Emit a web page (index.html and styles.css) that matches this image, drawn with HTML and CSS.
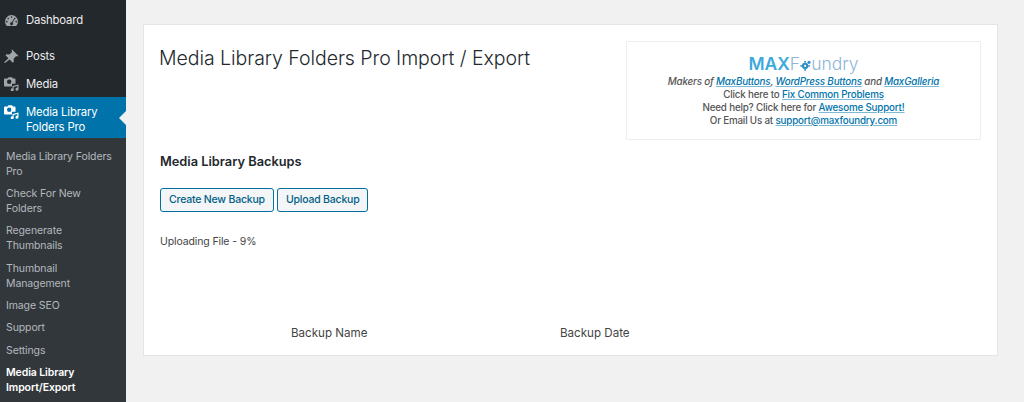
FILE: index.html
```html
<!DOCTYPE html>
<html lang="en">
<head>
<meta charset="utf-8">
<title>Media Library Folders Pro Import / Export</title>
<link rel="stylesheet" href="styles.css">
</head>
<body>
<div class="app">
  <nav class="side">
    <a class="item first"><svg class="ico gauge" viewBox="2 3 16 13.600"><path fill="currentColor" fill-rule="evenodd" d="M10 3a8 8 0 0 0-8 8c0 2.200.9 4.200 2.300 5.600h11.400A8 8 0 0 0 18 11a8 8 0 0 0-8-8zM10 4.600a1 1 0 1 1 0 2 1 1 0 0 1 0-2zM6 6.300a1 1 0 1 1 0 2 1 1 0 0 1 0-2zm8 0a1 1 0 1 1 0 2 1 1 0 0 1 0-2zM4.200 10.200a1 1 0 1 1 0 2 1 1 0 0 1 0-2zm11.600 0a1 1 0 1 1 0 2 1 1 0 0 1 0-2zM13 7.500l.9.5-2.500 4.600a1.800 1.800 0 1 1-1-.5z"/></svg><span>Dashboard</span></a>
    <a class="item gap"><svg class="ico" viewBox="1.500 1.500 17 16"><path fill="currentColor" d="M10.400 1.800l7.600 7.600-1.500.6-1.100-.4-3 3 .3 3.300-1.200 1.200-3.700-3.700-5.300 4-.9-.9 4.900-4.400-3.400-3.400 1.200-1.200 3.300.3 3-3-.4-1.200z"/></svg><span>Posts</span></a>
    <a class="item media"><svg class="ico" viewBox="0 0 15 14"><path fill="currentColor" fill-rule="evenodd" d="M1 1.500h2.500l1-1.200H8l1 1.200h1.500a1 1 0 0 1 1 1v4.300H8v2.700H1a1 1 0 0 1-1-1V2.500a1 1 0 0 1 1-1zm4.200 1a2.200 2.200 0 1 0 0 4.400 2.200 2.200 0 0 0 0-4.400zM8.500 9l6-1.600v4.800a1.500 1.500 0 1 1-1.200-1.400V9l-3.600 1v2.800a1.500 1.500 0 1 1-1.200-1.400z"/></svg><span>Media</span></a>
    <a class="item active"><svg class="ico" viewBox="0 0 15 14"><path fill="currentColor" fill-rule="evenodd" d="M1 1.500h2.500l1-1.200H8l1 1.200h1.500a1 1 0 0 1 1 1v4.300H8v2.700H1a1 1 0 0 1-1-1V2.500a1 1 0 0 1 1-1zm4.200 1a2.200 2.200 0 1 0 0 4.400 2.200 2.200 0 0 0 0-4.400zM8.500 9l6-1.600v4.800a1.500 1.500 0 1 1-1.200-1.400V9l-3.600 1v2.800a1.500 1.500 0 1 1-1.200-1.400z"/></svg><span>Media Library Folders Pro</span></a>
    <ul class="sub">
      <li>Media Library Folders Pro</li>
      <li>Check For New Folders</li>
      <li>Regenerate Thumbnails</li>
      <li>Thumbnail Management</li>
      <li>Image SEO</li>
      <li>Support</li>
      <li>Settings</li>
      <li class="current">Media Library Import/Export</li>
    </ul>
  </nav>
  <main class="main">
    <section class="card">
      <div class="top">
        <h1>Media Library Folders Pro Import / Export</h1>
        <aside class="promo">
          <div class="logo"><b>MAX</b>F<svg class="gear" viewBox="0 0 14 14"><circle cx="6.500" cy="7.500" r="4" fill="#2f8fc4"/><circle cx="6.500" cy="7.500" r="1.300" fill="#fff"/><circle cx="11.500" cy="3" r="2" fill="#2f8fc4"/><circle cx="6.500" cy="2.200" r="1.200" fill="#2f8fc4"/><circle cx="1.500" cy="7.500" r="1.200" fill="#2f8fc4"/><circle cx="6.500" cy="12.800" r="1.200" fill="#2f8fc4"/><circle cx="11.500" cy="7.500" r="1.200" fill="#2f8fc4"/></svg>undry</div>
          <p><i>Makers of <a>MaxButtons</a>, <a>WordPress Buttons</a> and <a>MaxGalleria</a></i></p>
          <p>Click here to <a>Fix Common Problems</a></p>
          <p>Need help? Click here for <a>Awesome Support!</a></p>
          <p>Or Email Us at <a>support@maxfoundry.com</a></p>
        </aside>
      </div>
      <h2>Media Library Backups</h2>
      <div class="buttons">
        <button class="btn">Create New Backup</button>
        <button class="btn">Upload Backup</button>
      </div>
      <p class="status">Uploading File - 9%</p>
      <div class="thead"><span>Backup Name</span><span>Backup Date</span></div>
    </section>
  </main>
</div>
</body>
</html>
```
FILE: styles.css
```css
* { box-sizing: border-box; }
html, body { margin: 0; height: 100%; overflow: hidden; }
body { background: #f1f1f1; font-family: Inter, "Liberation Sans", sans-serif; font-size: 11px; color: #444; }
.app { display: flex; height: 402px; }
.side { width: 126px; flex: none; display: flex; flex-direction: column; background: #23282d; color: #eee; font-size: 11.300px; letter-spacing: -0.150px; line-height: 15px; padding-top: 5px; overflow: hidden; }
.item { display: flex; align-items: flex-start; padding: 8px 6px 0 4px; height: 29px; flex: none; }
.first { height: 31px; }
.gap { margin-top: 5px; height: 28px; }
.media { height: 28px; }
.ico { width: 15px; height: 14px; flex: none; margin-right: 7px; color: #a0a5aa; }
.gauge { width: 13px; height: 11px; margin: 2px 8px 0 1px; }
.active { background: #0073aa; color: #fff; position: relative; padding-top: 8px; height: 41px; }
.active .ico { color: #fff; }
.active::after { content: ""; position: absolute; right: 0; top: 14px; border: 7px solid transparent; border-left: 0; border-right-color: #f1f1f1; }
.sub { list-style: none; margin: 0; padding: 10.500px 12px 0 6px; flex: 1; background: #32373c; color: #b4b9be; font-size: 10.500px; letter-spacing: -0.100px; line-height: 15px; }
.sub li { padding-bottom: 7.400px; }
.sub .current { color: #fff; font-weight: 600; }
.main { flex: 1; padding: 24px 26px 0 17px; min-width: 0; }
.card { height: 332px; background: #fff; border: 1px solid #e5e5e5; padding: 16px 16px 0; }
.top { display: flex; justify-content: space-between; align-items: flex-start; }
h1 { margin: 2px 0 0 -1px; font-size: 19.500px; letter-spacing: -0.050px; line-height: 30px; font-weight: 300; color: #23282d; }
.promo { width: 355px; height: 99px; border: 1px solid #eee; text-align: center; font-size: 9.800px; letter-spacing: -0.180px; line-height: 13px; padding-top: 11px; color: #555; font-weight: 500; }
.promo p { margin: 0; }
.promo a { color: #0073aa; text-decoration: underline; text-decoration-color: #7fb9d4; }
.logo { font-size: 17.500px; letter-spacing: 0; line-height: 21px; color: #8fb5d6; font-weight: 300; height: 21px; margin-bottom: 1px; }
.logo b { color: #3fa9dc; font-weight: 600; }
.gear { width: 11px; height: 11px; margin: 0 0 -1px; }
h2 { margin: 14px 0 0; font-size: 12.800px; line-height: 16px; font-weight: 600; color: #23282d; }
.buttons { display: flex; gap: 3px; margin-top: 18px; }
.btn { height: 24px; padding: 0 8px; background: #f3f5f6; border: 1px solid #0071a1; border-radius: 3px; color: #016087; font: 500 10.500px/22px Inter, "Liberation Sans", sans-serif; letter-spacing: -0.200px; }
.status { margin: 22.500px 0 0; line-height: 14px; font-size: 10.500px; letter-spacing: -0.120px; }
.thead { display: flex; margin-top: 77.500px; padding-left: 131px; font-size: 11.600px; line-height: 15px; }
.thead span:first-child { width: 269px; }
```
